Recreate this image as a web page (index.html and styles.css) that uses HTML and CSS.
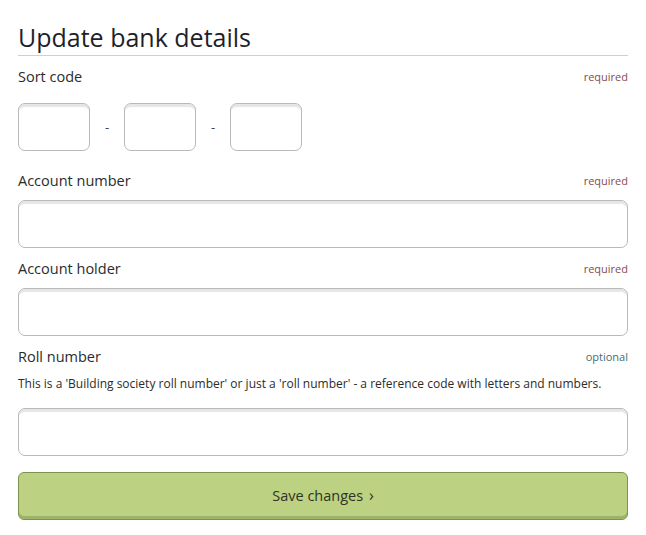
FILE: index.html
```html
<!DOCTYPE html>
<html lang="en">
<head>
<meta charset="utf-8">
<title>Update bank details</title>
<link rel="stylesheet" href="styles.css">
</head>
<body>
<main class="page">
  <h1 class="title">Update bank details</h1>
  <form class="form">
    <div class="field field-sort">
      <div class="label-row">
        <label class="label">Sort code</label>
        <span class="tag tag-required">required</span>
      </div>
      <div class="sort-inputs">
        <input class="input input-sort" type="text">
        <span class="dash">-</span>
        <input class="input input-sort" type="text">
        <span class="dash">-</span>
        <input class="input input-sort" type="text">
      </div>
    </div>
    <div class="field">
      <div class="label-row">
        <label class="label">Account number</label>
        <span class="tag tag-required">required</span>
      </div>
      <input class="input input-wide" type="text">
    </div>
    <div class="field">
      <div class="label-row">
        <label class="label">Account holder</label>
        <span class="tag tag-required">required</span>
      </div>
      <input class="input input-wide" type="text">
    </div>
    <div class="field">
      <div class="label-row">
        <label class="label">Roll number</label>
        <span class="tag tag-optional">optional</span>
      </div>
      <p class="help">This is a 'Building society roll number' or just a 'roll number' - a reference code with letters and numbers.</p>
      <input class="input input-wide input-roll" type="text">
    </div>
    <button class="button" type="button">Save changes <span class="chev">›</span></button>
  </form>
</main>
</body>
</html>
```
FILE: styles.css
```css
* { box-sizing: border-box; }
html, body { margin: 0; padding: 0; background: #fff; }
body {
  font-family: "Open Sans", "Noto Sans", sans-serif;
  color: #2b2b2b;
}
.page {
  padding: 0 18px;
}
.title {
  margin: 0;
  padding: 20px 0 1px;
  font-size: 25px;
  line-height: 34px;
  font-weight: 400;
  color: #1f1f28;
  border-bottom: 1px solid #cfcfcf;
}
.form {
  display: flex;
  flex-direction: column;
  padding-top: 10px;
}
.field {
  display: flex;
  flex-direction: column;
  margin-bottom: 10px;
}
.field-sort { margin-bottom: 19px; }
.label-row {
  display: flex;
  justify-content: space-between;
  align-items: center;
  height: 20px;
  margin-bottom: 10px;
}
.field-sort .label-row { margin-bottom: 17px; }
.label {
  font-size: 14.5px;
  color: #2b2b2b;
}
.tag {
  font-size: 11px;
}
.tag-required { color: #8b4a4a; }
.tag-optional { color: #3e6f74; }
.help {
  margin: 0 0 16px;
  font-size: 12px;
  line-height: 16px;
  color: #2b2b2b;
}
.sort-inputs {
  display: flex;
  align-items: center;
}
.dash {
  width: 34px;
  text-align: center;
  font-size: 13px;
  color: #444;
}
.input {
  height: 48px;
  border: 1px solid #b9b9b9;
  border-radius: 7px;
  background: #fff;
  box-shadow: inset 0 4px 1px -1px #e6e6e6;
  font: inherit;
  outline: none;
  padding: 0 10px;
}
.input-sort { width: 72px; }
.input-wide { width: 100%; }
.button {
  margin-top: 6px;
  height: 48px;
  width: 100%;
  border: 1px solid #7b9350;
  border-radius: 6px;
  background: #bcd181;
  box-shadow: inset 0 -3px 0 #9db468;
  font-family: "Open Sans", "Noto Sans", sans-serif;
  font-size: 14.5px;
  color: #2f3324;
  padding: 0 0 2px;
  cursor: pointer;
}
.chev {
  font-size: 16px;
  margin-left: 2px;
}
```
